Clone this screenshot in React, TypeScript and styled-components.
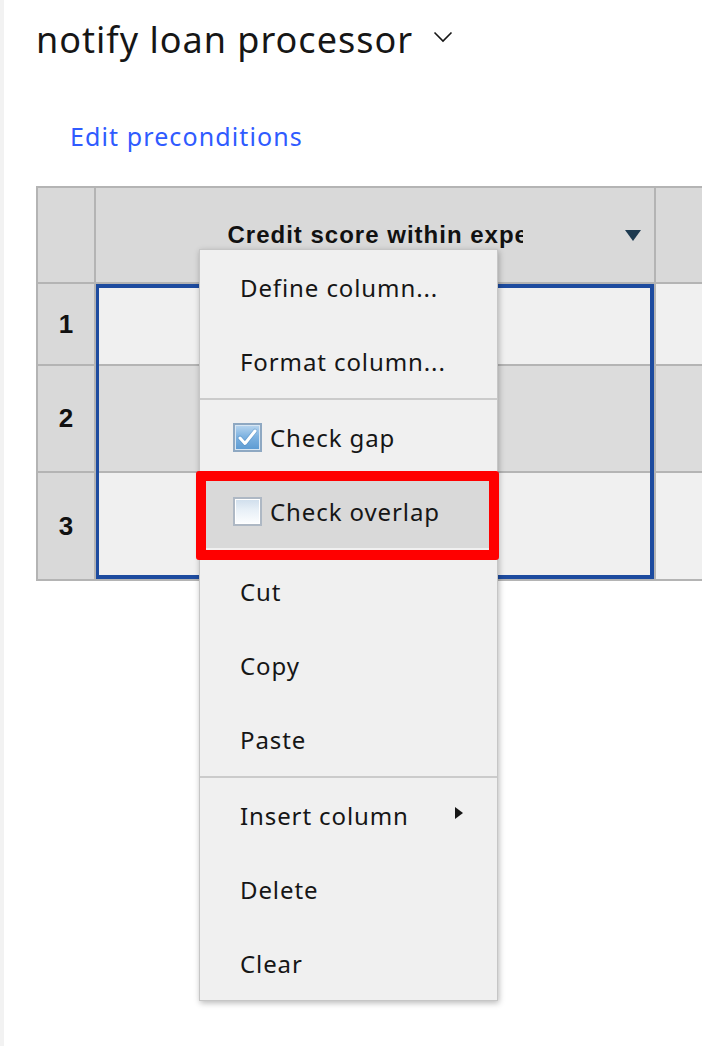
import React from 'react';
import styled, { createGlobalStyle } from 'styled-components';

const GlobalStyle = createGlobalStyle`
  html, body {
    margin: 0;
    padding: 0;
    background: #ffffff;
    overflow: hidden;
  }
  body {
    font-family: "Noto Sans", "Open Sans", sans-serif;
    color: #161616;
  }
`;

const Page = styled.div`
  display: flex;
  width: 702px;
  height: 1046px;
  overflow: hidden;
`;

const Rail = styled.div`
  flex: none;
  width: 4px;
  background: #f2f2f2;
`;

const Main = styled.main`
  flex: 1;
  min-width: 0;
  padding: 16px 0 0 32px;
  display: flex;
  flex-direction: column;
  align-items: flex-start;
`;

const TitleRow = styled.div`
  display: flex;
  align-items: flex-start;
  gap: 20px;
`;

const Title = styled.h1`
  margin: 0;
  font-family: "Noto Sans", sans-serif;
  font-size: 36px;
  font-weight: 400;
  line-height: 48px;
  letter-spacing: 1px;
  color: #161616;
`;

const Chevron = styled.svg`
  flex: none;
  margin-top: 15px;
`;

const EditLink = styled.a`
  margin: 56px 0 0 34px;
  font-size: 25px;
  line-height: 32px;
  letter-spacing: 1.1px;
  color: #2f5bff;
  text-decoration: none;
  cursor: pointer;
`;

const TableWrap = styled.div`
  position: relative;
  margin-top: 34px;
`;

const Grid = styled.div`
  display: grid;
  grid-template-columns: 56px 558px 120px;
  grid-template-rows: 94px 80px 105px 106px;
  gap: 2px;
  width: max-content;
  background: #b4b4b4;
  border: 2px solid #b4b4b4;
  border-right: none;
`;

const Cell = styled.div<{ $row: number; $col: number; $tone: 'head' | 'light' | 'dark' }>`
  grid-row: ${(p) => p.$row};
  grid-column: ${(p) => p.$col};
  background: ${(p) => (p.$tone === 'light' ? '#f0f0f0' : p.$tone === 'dark' ? '#dcdcdc' : '#d9d9d9')};
`;

const RowNum = styled(Cell)`
  display: flex;
  align-items: center;
  justify-content: center;
  font-family: "Liberation Sans", Arial, sans-serif;
  font-weight: 700;
  font-size: 26px;
  color: #111;
`;

const HeaderCell = styled(Cell)`
  display: grid;
  grid-template-columns: 1fr 295px 1fr;
  align-items: center;
`;

const HeaderLabel = styled.span`
  grid-column: 2;
  overflow: hidden;
  white-space: nowrap;
  font-family: "Liberation Sans", Arial, sans-serif;
  font-weight: 700;
  font-size: 24px;
  letter-spacing: 1px;
  color: #111;
`;

const DropTriangle = styled.span`
  grid-column: 3;
  justify-self: end;
  margin-right: 13px;
  width: 0;
  height: 0;
  border-left: 8px solid transparent;
  border-right: 8px solid transparent;
  border-top: 11px solid #1d3a50;
`;

const Selection = styled.div`
  grid-row: 2 / 5;
  grid-column: 2;
  border: 4px solid #1d4b9f;
  border-left-width: 3px;
  z-index: 1;
  pointer-events: none;
`;

const Menu = styled.ul`
  position: absolute;
  left: 163px;
  top: 63px;
  z-index: 5;
  width: 297px;
  margin: 0;
  padding: 0;
  list-style: none;
  background: #f0f0f0;
  border: 1px solid #c6c6c6;
  box-shadow: 1px 2px 6px rgba(0, 0, 0, 0.28);
`;

const Item = styled.li<{ $check?: boolean; $active?: boolean }>`
  position: relative;
  height: 74px;
  display: flex;
  align-items: center;
  gap: 8px;
  padding: 0 34px 0 ${(p) => (p.$check ? '33px' : '40px')};
  font-size: 24px;
  letter-spacing: 0.9px;
  color: #161616;
  background: ${(p) => (p.$active ? '#d9d9d9' : 'transparent')};
`;

const ItemLabel = styled.span`
  flex: 1;
  white-space: nowrap;
`;

const Separator = styled.li<{ $tall?: boolean }>`
  height: 2px;
  margin: ${(p) => (p.$tall ? '2px 0' : '0')};
  background: #cbcbcb;
`;

const Callout = styled.span`
  position: absolute;
  top: -3px;
  bottom: -12px;
  left: -4px;
  right: -2px;
  border: 10px solid #ff0000;
  border-radius: 3px;
  z-index: 3;
  pointer-events: none;
`;

const SubArrow = styled.span`
  width: 0;
  height: 0;
  margin-bottom: 4px;
  border-top: 6.5px solid transparent;
  border-bottom: 6.5px solid transparent;
  border-left: 8px solid #161616;
`;

const Box = styled.span<{ $checked: boolean }>`
  flex: none;
  box-sizing: border-box;
  width: 29px;
  height: 29px;
  border: 2px solid ${(p) => (p.$checked ? '#8ea8c2' : '#aeb8c4')};
  box-shadow: inset 0 0 0 1px ${(p) => (p.$checked ? '#d7e6f3' : '#ffffff')};
  background: ${(p) =>
    p.$checked
      ? 'linear-gradient(180deg, #b9d6ef 0%, #7fb3e1 45%, #5b9ad2 100%)'
      : 'linear-gradient(180deg, #cfdeec 0%, #e8f0f7 45%, #fdfeff 100%)'};
  display: flex;
  align-items: center;
  justify-content: center;
`;

function CheckBox({ checked }: { checked: boolean }) {
  return (
    <Box $checked={checked}>
      {checked && (
        <svg width="21" height="19" viewBox="0 0 21 19">
          <path d="M3 10 L8 15.5 L18 3" fill="none" stroke="#3f7db8" strokeWidth="4.5" strokeLinecap="round" strokeLinejoin="round" opacity="0.35" />
          <path d="M3 10 L8 15.5 L18 3" fill="none" stroke="#ffffff" strokeWidth="3" strokeLinecap="round" strokeLinejoin="round" />
        </svg>
      )}
    </Box>
  );
}

type Entry =
  | { kind: 'item'; label: string; check?: boolean; checked?: boolean; active?: boolean; sub?: boolean }
  | { kind: 'sep'; tall?: boolean };

const entries: Entry[] = [
  { kind: 'item', label: 'Define column...' },
  { kind: 'item', label: 'Format column...' },
  { kind: 'sep' },
  { kind: 'item', label: 'Check gap', check: true, checked: true },
  { kind: 'item', label: 'Check overlap', check: true, checked: false, active: true },
  { kind: 'sep', tall: true },
  { kind: 'item', label: 'Cut' },
  { kind: 'item', label: 'Copy' },
  { kind: 'item', label: 'Paste' },
  { kind: 'sep' },
  { kind: 'item', label: 'Insert column', sub: true },
  { kind: 'item', label: 'Delete' },
  { kind: 'item', label: 'Clear' },
];

const rows: { n: number; tone: 'light' | 'dark' }[] = [
  { n: 1, tone: 'light' },
  { n: 2, tone: 'dark' },
  { n: 3, tone: 'light' },
];

export default function App() {
  return (
    <>
      <GlobalStyle />
      <Page>
        <Rail />
        <Main>
          <TitleRow>
            <Title>notify loan processor</Title>
            <Chevron width="20" height="12" viewBox="0 0 20 12">
              <path d="M1.5 1.5 L10 10 L18.5 1.5" fill="none" stroke="#161616" strokeWidth="1.6" />
            </Chevron>
          </TitleRow>
          <EditLink>Edit preconditions</EditLink>
          <TableWrap>
            <Grid>
              <Cell $row={1} $col={1} $tone="head" />
              <HeaderCell $row={1} $col={2} $tone="head">
                <HeaderLabel>Credit score within expected range</HeaderLabel>
                <DropTriangle />
              </HeaderCell>
              <Cell $row={1} $col={3} $tone="head" />
              {rows.map((r, i) => (
                <React.Fragment key={r.n}>
                  <RowNum $row={i + 2} $col={1} $tone="head">{r.n}</RowNum>
                  <Cell $row={i + 2} $col={2} $tone={r.tone} />
                  <Cell $row={i + 2} $col={3} $tone={r.tone} />
                </React.Fragment>
              ))}
              <Selection />
            </Grid>
            <Menu>
              {entries.map((e, i) =>
                e.kind === 'sep' ? (
                  <Separator key={i} $tall={e.tall} />
                ) : (
                  <Item key={i} $check={e.check} $active={e.active}>
                    {e.check && <CheckBox checked={!!e.checked} />}
                    <ItemLabel>{e.label}</ItemLabel>
                    {e.sub && <SubArrow />}
                    {e.active && <Callout />}
                  </Item>
                )
              )}
            </Menu>
          </TableWrap>
        </Main>
      </Page>
    </>
  );
}
